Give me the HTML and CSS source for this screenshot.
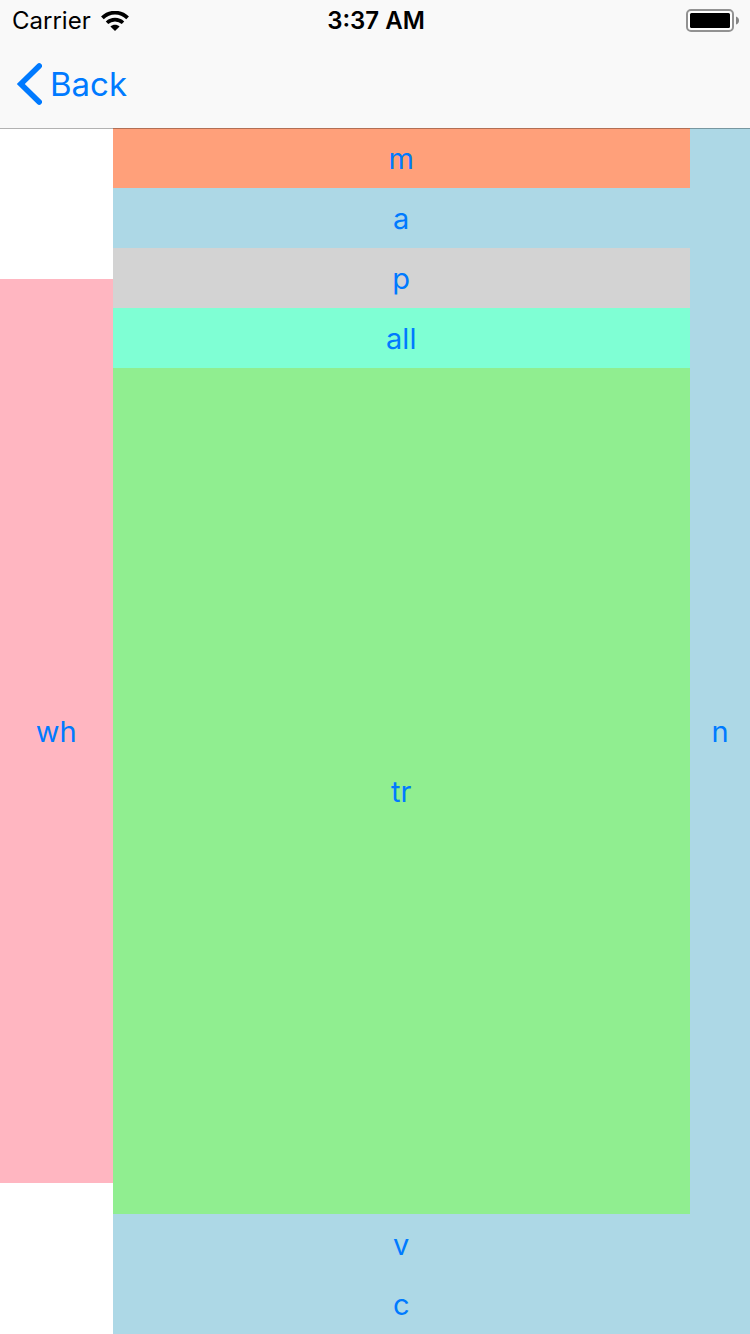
FILE: index.html
```html
<!DOCTYPE html>
<html lang="en">
<head>
<meta charset="utf-8">
<meta name="viewport" content="width=device-width, initial-scale=1">
<title>Layout</title>
<link rel="stylesheet" href="styles.css">
</head>
<body>
<header class="header">
  <div class="status">
    <div class="carrier">
      <span>Carrier</span>
      <svg class="wifi" viewBox="0 0 28 20" aria-hidden="true">
        <path d="M1.4 6.9C8.5-.1 19.5-.1 26.6 6.9" fill="none" stroke="#000" stroke-width="3.8"/>
        <path d="M6 11.8C10.5 7.6 17.5 7.6 22 11.8" fill="none" stroke="#000" stroke-width="3.6"/>
        <path d="M9.4 15.5C12 13.1 16 13.1 18.6 15.5L14 20Z"/>
      </svg>
    </div>
    <time class="clock">3:37 AM</time>
    <svg class="battery" viewBox="0 0 54 24" aria-hidden="true">
      <rect x="1" y="1" width="46" height="21" rx="4" fill="#fff" stroke="#929292" stroke-width="2"/>
      <rect x="4" y="4" width="40" height="15" rx="1.5"/>
      <path d="M50 7.5Q53 8.5 53 11.5T50 15.5Z" fill="#858585"/>
    </svg>
  </div>
  <nav class="nav">
    <button class="back" type="button">
      <svg class="chevron" viewBox="0 0 26 42" aria-hidden="true">
        <path d="M23.2 3L4.8 21L23.2 39" fill="none" stroke="#007aff" stroke-width="5.6" stroke-linecap="round"/>
      </svg>
      <span>Back</span>
    </button>
  </nav>
</header>
<main class="content">
  <div class="side">
    <button class="cell pink" type="button">wh</button>
  </div>
  <div class="stack">
    <button class="cell row salmon" type="button">m</button>
    <button class="cell row blue" type="button">a</button>
    <button class="cell row gray" type="button">p</button>
    <button class="cell row aqua" type="button">all</button>
    <button class="cell fill green" type="button">tr</button>
    <button class="cell row blue" type="button">v</button>
    <button class="cell row blue" type="button">c</button>
  </div>
  <button class="cell blue" type="button">n</button>
</main>
</body>
</html>
```
FILE: styles.css
```css
* {
  box-sizing: border-box;
}

body {
  margin: 0;
  min-height: 100vh;
  display: flex;
  flex-direction: column;
  background: #fff;
  font-family: Inter, Roboto, "Liberation Sans", sans-serif;
}

button {
  margin: 0;
  padding: 0;
  border: 0;
  background: none;
  color: #007aff;
  font: inherit;
  cursor: pointer;
}

.header {
  position: relative;
  z-index: 1;
  background: #f9f9f9;
  box-shadow: 0 1px 0 rgba(0, 0, 0, 0.3);
}

.status {
  display: grid;
  grid-template-columns: 1fr auto 1fr;
  align-items: center;
  height: 42px;
  padding: 0 10px 0 12px;
  font-size: 24px;
  line-height: 40px;
}

.carrier {
  display: flex;
  align-items: center;
  gap: 10px;
}

.wifi {
  width: 28px;
  height: 20px;
}

.clock {
  font-weight: 600;
}

.battery {
  justify-self: end;
  width: 54px;
  height: 24px;
}

.nav {
  display: flex;
  align-items: center;
  height: 86px;
  padding: 0 16px 2px;
}

.back {
  display: flex;
  align-items: center;
  gap: 8px;
  font-size: 33px;
  line-height: 40px;
}

.chevron {
  width: 26px;
  height: 42px;
}

.content {
  flex: 1;
  display: grid;
  grid-template-columns: 15% 1fr 60px;
}

.side {
  display: grid;
  grid-template-rows: 1fr 6fr 1fr;
}

.side .cell {
  grid-row: 2;
}

.stack {
  display: flex;
  flex-direction: column;
}

.cell {
  padding-top: 2px;
  font-size: 29px;
  line-height: 36px;
}

.row {
  height: 60px;
}

.fill {
  flex: 1;
}

.pink {
  background: lightpink;
}

.salmon {
  background: lightsalmon;
}

.blue {
  background: lightblue;
}

.gray {
  background: lightgray;
}

.aqua {
  background: aquamarine;
}

.green {
  background: lightgreen;
}
```
